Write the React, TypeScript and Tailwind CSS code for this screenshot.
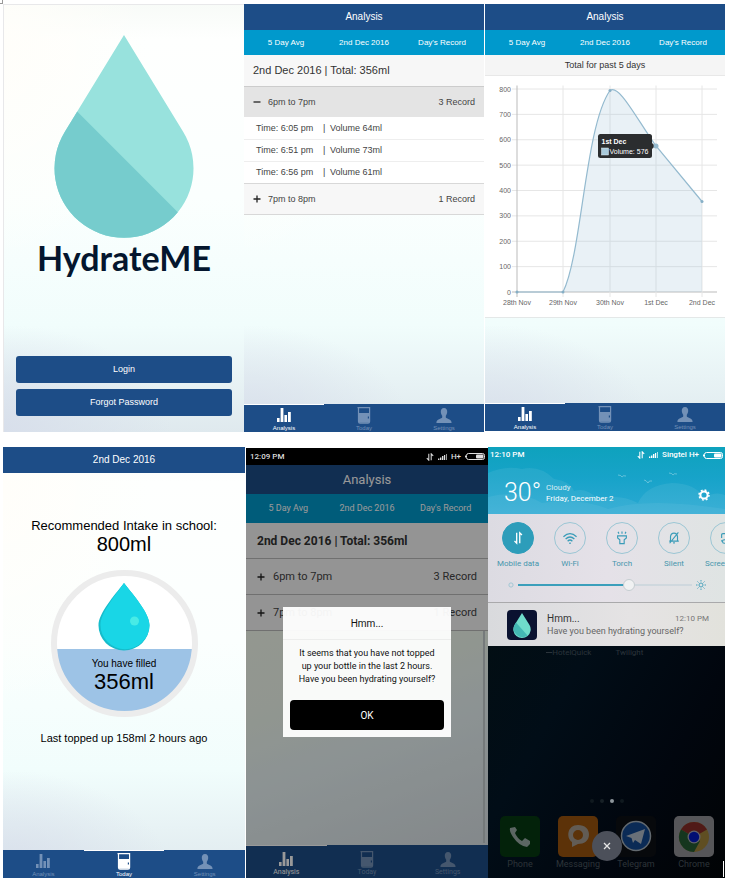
import { ReactNode } from "react";
import { clsx } from "clsx";

const HELV = "font-['Liberation_Sans',Arial,sans-serif]";
const ROBO = "font-[Roboto,'Noto_Sans',sans-serif]";
const PAPER =
  "bg-[radial-gradient(ellipse_70%_25%_at_0%_100%,#d8dfeb_0%,transparent_100%),radial-gradient(ellipse_60%_50%_at_0%_10%,#fffefa_0%,transparent_100%),linear-gradient(to_bottom,#f8fbf8_0%,#fefffe_8%,#fbfffe_45%,#f1fdfc_75%,#dfe9ee_100%)]";

function BarsIcon({ className }: { className: string }) {
  return (
    <svg viewBox="0 0 14 14" className={className} fill="currentColor" aria-hidden="true">
      <rect x="0" y="10" width="2.6" height="4" />
      <rect x="3.6" y="0" width="2.8" height="14" />
      <rect x="7.4" y="7" width="2.6" height="7" />
      <rect x="11" y="4" width="2.8" height="10" />
    </svg>
  );
}

function BeakerIcon({ className }: { className: string }) {
  return (
    <svg viewBox="0 0 14 17" className={className} fill="none" stroke="currentColor" aria-hidden="true">
      <path d="M0.5 0.6H13.2M1.5 1V14.6Q1.5 16.2 3 16.2H11Q12.6 16.2 12.6 14.6V1" strokeWidth="1.2" />
      <path d="M2 6H12V9.500H10.800V11.500H12V15.800H2Z" fill="currentColor" stroke="none" />
    </svg>
  );
}

function PersonIcon({ className }: { className: string }) {
  return (
    <svg viewBox="0 0 16 15" className={className} fill="currentColor" aria-hidden="true">
      <path d="M8 0C10.3 0 11.4 1.7 11.2 4C11.1 5.9 10.3 7 9.8 7.8V9.6C10.4 11 15.6 11 15.6 15H0.4C0.4 11 5.6 11 6.2 9.6V7.8C5.7 7 4.9 5.9 4.8 4C4.6 1.7 5.7 0 8 0Z" />
    </svg>
  );
}

function NavBar({ active, roboto = false }: { active: number; roboto?: boolean }) {
  const items = [
    { name: "Analysis", icon: <BarsIcon className="h-[14px] w-[14px]" /> },
    { name: "Today", icon: <BeakerIcon className="h-[17px] w-[14px]" /> },
    { name: "Settings", icon: <PersonIcon className="h-[15px] w-4" /> },
  ];
  return (
    <nav className={clsx("mt-auto grid grid-cols-3 bg-[#1d4d87]", roboto ? "h-[33px]" : "h-7")}>
      {items.map((item, i) => (
        <button
          key={item.name}
          type="button"
          className={clsx(
            "flex flex-col items-center justify-end border-t",
            i === active ? "border-white text-white" : "border-[#1d4d87] text-[#7391b7]",
            roboto && "pb-0.5",
          )}
        >
          <span className="flex h-[18px] items-center">{item.icon}</span>
          <span className={clsx("leading-[8px]", roboto ? "text-[7px]" : "text-[6px]")}>{item.name}</span>
        </button>
      ))}
    </nav>
  );
}

function TitleBar({ children, roboto = false }: { children: ReactNode; roboto?: boolean }) {
  return (
    <header
      className={clsx(
        "flex items-center justify-center bg-[#1d4d87] leading-none text-white",
        roboto ? "h-[29px] text-[13px]" : "h-[26px] text-[10px]",
      )}
    >
      {children}
    </header>
  );
}

function Tabs({ roboto = false }: { roboto?: boolean }) {
  return (
    <div
      className={clsx(
        "grid grid-cols-3 bg-[#0099cc] px-[3px] leading-none text-white",
        roboto ? "h-[29px] text-[9px]" : "h-[25px] text-[8px]",
      )}
    >
      <button type="button">5 Day Avg</button>
      <button type="button">2nd Dec 2016</button>
      <button type="button">Day's Record</button>
    </div>
  );
}

function GroupRow({ open, label, count, roboto = false }: { open?: boolean; label: string; count: string; roboto?: boolean }) {
  return (
    <button
      type="button"
      aria-expanded={!!open}
      className={clsx(
        "flex w-full items-center text-left leading-none text-[#444]",
        roboto ? "h-9 border-b border-[#bbb] bg-[#f7f7f7] px-[11px] text-[11px]" : "px-[9px] text-[9px]",
        !roboto && (open ? "h-[30px] bg-[#e4e4e4]" : "h-8 border-y border-[#d8d8d8] bg-[#f7f7f7]"),
      )}
    >
      <svg viewBox="0 0 8 8" className={clsx("h-2 w-2", roboto ? "mr-2" : "mr-[7px]")} stroke="#222" strokeWidth="1.3" aria-hidden="true">
        <path d={open ? "M0.5 4H7.5" : "M0.5 4H7.5M4 0.5V7.5"} />
      </svg>
      <span>{label}</span>
      <span className="ml-auto">{count}</span>
    </button>
  );
}

function LoginScreen() {
  return (
    <section className={clsx("flex flex-col items-center border-l border-t border-[#e8e8ea] px-3 pb-4 pt-[30px]", PAPER, HELV)}>
      <svg viewBox="0 0 140 203" className="h-[203px] w-[140px]" aria-hidden="true">
        <clipPath id="drop">
          <path d="M70 0L129.3 97A69.5 69.5 0 1 1 10.7 97Z" />
        </clipPath>
        <g clipPath="url(#drop)">
          <rect width="140" height="203" fill="#98e2dd" />
          <path d="M0 53.200L140 193.500V203H0Z" fill="#76cccd" />
        </g>
      </svg>
      <h1 className="font-[Lato,Carlito,sans-serif] text-[34px] font-bold leading-10 text-[#04162e]">HydrateME</h1>
      <div className="mt-auto flex w-full flex-col gap-1.5">
        <button type="button" className="h-[27px] rounded-[3px] bg-[#1d4d87] text-[9px] text-white">Login</button>
        <button type="button" className="h-[27px] rounded-[3px] bg-[#1d4d87] text-[9px] text-white">Forgot Password</button>
      </div>
    </section>
  );
}

const records = [
  ["Time: 6:05 pm", "Volume 64ml"],
  ["Time: 6:51 pm", "Volume 73ml"],
  ["Time: 6:56 pm", "Volume 61ml"],
];

function RecordScreen() {
  return (
    <section className={clsx("flex flex-col", PAPER, HELV)}>
      <TitleBar>Analysis</TitleBar>
      <Tabs />
      <h2 className="flex h-8 items-center border-b border-[#ccc] bg-[#f7f7f7] px-[9px] text-[11px] leading-none text-[#333]">
        2nd Dec 2016 | Total: 356ml
      </h2>
      <GroupRow open label="6pm to 7pm" count="3 Record" />
      <ul className="bg-white text-[9px] leading-none text-[#444]">
        {records.map(([time, volume], i) => (
          <li key={time} className={clsx("flex h-[22px] items-center pl-3", i > 0 && "border-t border-[#eee]")}>
            <span className="w-[67px]">{time}</span>
            <span className="w-[7px]">|</span>
            <span>{volume}</span>
          </li>
        ))}
      </ul>
      <GroupRow label="7pm to 8pm" count="1 Record" />
      <NavBar active={0} />
    </section>
  );
}

const dayX = [32, 78, 125, 171, 217];
const days = ["28th Nov", "29th Nov", "30th Nov", "1st Dec", "2nd Dec"];
const dots = [[32, 216], [78, 216], [125, 14.5], [217, 125.5]];
const ticks = [0, 100, 200, 300, 400, 500, 600, 700, 800];
const curve = "M32 216H78C97 178 100 50 125 14.5C134 8 150 40 171 70L217 125.5";

function Chart() {
  return (
    <svg viewBox="0 0 240 241" className="w-full bg-white" role="img" aria-label="Total for past 5 days">
      {ticks.map((t) => {
        const y = 216 - t * 0.25375;
        return (
          <g key={t}>
            <path d={`M27 ${y}H232`} stroke={t === 0 ? "#bbb" : "#e6e6e6"} />
            <text x="26" y={y + 2.5} textAnchor="end" fontSize="7" fill="#666">{t}</text>
          </g>
        );
      })}
      {dayX.map((x, i) => (
        <g key={x}>
          <path d={`M${x} 9.500V221`} stroke={i === 0 ? "#bbb" : "#e6e6e6"} />
          <text x={x} y="228.500" textAnchor="middle" fontSize="7" fill="#666">{days[i]}</text>
        </g>
      ))}
      <path d={`${curve}V216Z`} fill="#a0c4d6" fillOpacity="0.23" />
      <path d={curve} fill="none" stroke="#94bacf" strokeWidth="1.2" />
      {dots.map(([x, y]) => (
        <circle key={x} cx={x} cy={y} r="1.500" fill="#86afc6" />
      ))}
      <path d="M167 67L170 70L167 73Z" fill="#2b2d2f" />
      <rect x="113" y="58" width="54" height="24" rx="2.500" fill="#2b2d2f" />
      <circle cx="171" cy="70" r="2.500" fill="#94bacf" />
      <text x="116.500" y="68" fontSize="7" fontWeight="bold" fill="#fff">1st Dec</text>
      <rect x="116.500" y="72" width="7" height="7" fill="#a9cadb" stroke="#dfeef6" strokeWidth="0.500" />
      <text x="124.500" y="78" fontSize="7" fill="#fff">Volume: 576</text>
    </svg>
  );
}

function ChartScreen() {
  return (
    <section className={clsx("mb-px flex flex-col", PAPER, HELV)}>
      <TitleBar>Analysis</TitleBar>
      <Tabs />
      <h2 className="flex h-[21px] items-center justify-center border-b border-[#e8e8e8] bg-[#f5f5f5] text-[9px] leading-none text-[#333]">
        Total for past 5 days
      </h2>
      <div className="border-b border-[#e4e8e8]"><Chart /></div>
      <NavBar active={0} />
    </section>
  );
}

function TodayScreen() {
  return (
    <section className={clsx("flex flex-col text-black", PAPER, HELV)}>
      <TitleBar>2nd Dec 2016</TitleBar>
      <div className="flex flex-col items-center pt-[45px]">
        <p className="text-[13px] leading-[15px]">Recommended Intake in school:</p>
        <p className="text-[20px] leading-[22px]">800ml</p>
        <div className="mt-[15px] flex h-[147px] w-[147px] flex-col items-center overflow-hidden rounded-full border-[6px] border-[#ececec] bg-[linear-gradient(to_bottom,white_73px,#9dc3e6_73px)] pt-[7px]">
          <svg viewBox="0 0 52 68" className="h-[68px] w-[52px]" aria-hidden="true">
            <path d="M26 0C36 13 51.500 30 51.500 42.500A25.500 25 0 0 1 0.500 42.500C0.500 30 16 13 26 0Z" fill="#16bccb" />
            <path d="M26 0C36 13 51.500 30 51.500 42A24.500 24.200 0 0 1 2.500 42C2.500 30 17 13 26 0Z" fill="#19d6e6" />
            <circle cx="36.500" cy="38" r="4.500" fill="#48ebe6" />
          </svg>
          <p className="mt-[7px] text-[10px] leading-3">You have filled</p>
          <p className="text-[22px] leading-6">356ml</p>
        </div>
        <p className="mt-[14px] text-[11px] leading-[14px]">Last topped up 158ml 2 hours ago</p>
      </div>
      <NavBar active={1} />
    </section>
  );
}

function DataArrows({ className }: { className: string }) {
  return (
    <svg viewBox="0 0 10 10" className={className} fill="none" stroke="currentColor" strokeWidth="1.3" aria-hidden="true">
      <path d="M3.500 1V9L1 6.500M6.500 9V1L9 3.500" />
    </svg>
  );
}

function StatusIcons({ carrier }: { carrier: string }) {
  return (
    <span className="ml-auto flex items-center gap-1">
      <DataArrows className="h-2 w-2" />
      <svg viewBox="0 0 9 6" className="h-1.5 w-[9px]" fill="currentColor" aria-hidden="true">
        <path d="M0 4.500H1.400V6H0ZM2 3.500H3.400V6H2ZM4 2H5.400V6H4ZM6 1H7.200V6H6ZM8 0H8.700V6H8Z" />
      </svg>
      <span>{carrier}</span>
      <svg viewBox="0 0 20 7" className="h-[7px] w-5" aria-hidden="true">
        <rect x="1.500" y="0.500" width="18" height="6" rx="2" fill="none" stroke="currentColor" />
        <rect x="11" y="1.500" width="7.500" height="4" rx="1" fill="currentColor" />
        <rect x="0" y="2.500" width="1" height="2" fill="currentColor" />
      </svg>
    </span>
  );
}

function DialogScreen() {
  return (
    <section className={clsx("mt-px flex flex-col bg-black", ROBO)}>
      <div className="flex h-[17px] items-center pl-1 pr-[3px] text-[8px] font-medium leading-none text-[#ddd]">
        <span>12:09 PM</span>
        <StatusIcons carrier="H+" />
      </div>
      <div className="relative flex grow flex-col bg-[linear-gradient(160deg,#fdfff2_0%,#f2fbf0_50%,#eaf5f6_65%,#d8dfe4_100%)]">
        <TitleBar roboto>Analysis</TitleBar>
        <Tabs roboto />
        <h2 className="flex h-9 items-center border-b border-[#bbb] bg-[#f7f7f7] px-[11px] text-[12px] font-bold leading-none text-[#333]">
          2nd Dec 2016 | Total: 356ml
        </h2>
        <GroupRow roboto label="6pm to 7pm" count="3 Record" />
        <GroupRow roboto label="7pm to 8pm" count="1 Record" />
        <div className="mb-0.5 mr-[3px] grow border-r-2 border-[#c4cccd]" />
        <NavBar active={0} roboto />
        <div className="absolute inset-0 flex justify-center bg-black/40 pt-[142px]">
          <div role="dialog" aria-label="Hmm..." className="flex h-[130px] w-[168px] flex-col bg-white/95 text-center text-[#111]">
            <h3 className="h-[33px] border-b border-black/5 text-[10px] leading-[33px]">Hmm...</h3>
            <p className="pt-[7px] text-[9px] leading-[13px]">
              It seems that you have not topped<br />
              up your bottle in the last 2 hours.<br />
              Have you been hydrating yourself?
            </p>
            <button type="button" className="mx-[7px] mb-[7px] mt-auto h-[30px] rounded-sm bg-black text-[10px] text-white">OK</button>
          </div>
        </div>
      </div>
    </section>
  );
}

const toggles = [
  { name: "Mobile data", on: true, icon: <path d="M6.500 2V14L4 11.500M10 14V2L12.500 4.500" strokeWidth="1.500" /> },
  {
    name: "Wi-Fi",
    icon: <path d="M0.500 6.500Q8 -0.500 15.500 6.500M3 9.200Q8 4.500 13 9.200M5.300 11.700Q8 9 10.700 11.700M7.200 14H8.800" strokeWidth="1.500" />,
  },
  { name: "Torch", icon: <path d="M3 5.500H13V8L10.500 10V14.500H5.500V10L3 8ZM8 0.500V3M3.500 1L4.500 3M12.500 1L11.500 3" strokeWidth="1.300" /> },
  { name: "Silent", icon: <path d="M4 11.500V6.500Q4.500 2.500 8 2.500Q11.500 2.500 12 6.500V11.500ZM2.500 11.500H13.500M7 13.500H9M13 1.500L3 14" strokeWidth="1.300" /> },
  { name: "Scree", edge: true, icon: <path d="M8 3H4.500Q3 3 3 4.500V8M3 10.500V12M13 8V4.500Q13 3 11.500 3M6 14A2 2 0 1 1 6 10A2 2 0 1 1 6 14M8 10.500L13 8" strokeWidth="1.300" /> },
];

function Sun({ big = false }: { big?: boolean }) {
  return (
    <svg viewBox="0 0 10 10" className={big ? "h-2.5 w-2.5" : "h-1.5 w-1.5"} fill="none" stroke={big ? "#4ba3bd" : "#9cc4d2"} strokeWidth={big ? 1 : 1.500} aria-hidden="true">
      <circle cx="5" cy="5" r={big ? 2 : 3.500} />
      {big && <path d="M5 0V1.500M5 8.500V10M0 5H1.500M8.500 5H10M1.500 1.500L2.500 2.500M7.500 7.500L8.500 8.500M1.500 8.500L2.500 7.500M7.500 2.500L8.500 1.500" />}
    </svg>
  );
}

const apps = [
  {
    name: "Phone",
    tile: "bg-[#03220a]",
    icon: <path d="M10 12Q9 15 13 21Q19 30 27 31L30 28V25L25 22L22 25Q17 22 15 17L17 14L15 11Z" fill="#5c6663" />,
  },
  {
    name: "Messaging",
    tile: "bg-[#5c3208]",
    icon: <path d="M20 9C27 9 31 13 31 18.500C31 25 26 28 20 28L14 31L14 26C8 22 9 9 20 9ZM20 14A5 5 0 1 0 20 24A5 5 0 1 0 20 14Z" fill="#625c55" fillRule="evenodd" />,
  },
  {
    name: "Telegram",
    tile: "bg-[#07090c]",
    icon: (
      <>
        <circle cx="20" cy="20" r="14.500" fill="#0b2b56" stroke="#62696f" strokeWidth="1.500" />
        <path d="M10 20L29 13L25 28L19 24L17 27L15.500 22Z" fill="#697078" />
      </>
    ),
  },
  {
    name: "Chrome",
    tile: "bg-[#565659]",
    icon: (
      <>
        <circle cx="20" cy="21" r="15" fill="#5f4e22" />
        <path d="M20 21L7 13.500A15 15 0 0 1 33 13.500Z" fill="#501a17" />
        <path d="M20 21L7 13.500A15 15 0 0 0 20 36L26 25Z" fill="#15361e" />
        <circle cx="20" cy="21" r="6.500" fill="#62626a" />
        <circle cx="20" cy="21" r="5.200" fill="#020f73" />
      </>
    ),
  },
];

function PhoneScreen() {
  return (
    <section className={clsx("relative flex flex-col overflow-hidden bg-[linear-gradient(120deg,#040f10_0%,#010d17_45%,#01060e_75%,#010305_100%)]", ROBO)}>
      <div className="relative h-[67px] shrink-0 bg-[linear-gradient(to_bottom,#0ea2bd_0%,#17a3c9_45%,#2ba9d3_100%)] text-white">
        <svg viewBox="0 0 237 67" className="absolute inset-0 h-full w-full" preserveAspectRatio="none" aria-hidden="true">
          <path d="M0 26Q18 18 34 22Q52 18 66 32Q82 34 86 44Q98 40 110 52Q130 46 150 56Q158 38 184 36Q206 36 216 50Q228 44 237 48V67H0Z" fill="#fff" fillOpacity="0.07" />
          <path d="M0 50Q30 42 54 56Q90 50 120 62Q160 50 237 62V67H0Z" fill="#fff" fillOpacity="0.06" />
          <path d="M130 28Q133 28 134 30Q135 28 138 29M156 33Q158 33 160 36Q161 33 164 34M181 26Q184 26 185 28Q186 26 189 27" fill="none" stroke="#fff" strokeOpacity="0.400" strokeWidth="0.800" />
        </svg>
        <div className="relative flex h-4 items-center pl-0.5 pr-0.5 text-[8px] font-medium leading-none">
          <span>12:10 PM</span>
          <StatusIcons carrier="Singtel H+" />
        </div>
        <div className="relative flex items-center pl-4 pr-[15px] pt-3.5">
          <span className="w-[42px] text-[25px] font-light leading-8">30°</span>
          <span className="flex flex-col text-[8px] leading-[11px]">
            <span className="opacity-80">Cloudy</span>
            <span>Friday, December 2</span>
          </span>
          <button type="button" aria-label="Settings" className="ml-auto mt-1">
            <svg viewBox="0 0 12 12" className="h-3 w-3" fill="none" stroke="white" aria-hidden="true">
              <circle cx="6" cy="6" r="3.600" strokeWidth="2" />
              <circle cx="6" cy="6" r="5" strokeWidth="1.500" strokeDasharray="1.900 2.027" />
            </svg>
          </button>
        </div>
      </div>
      <div className="h-[89px] shrink-0 border-b border-[#a9a9ab] bg-[linear-gradient(to_right,#dcdbe2,#e5e1e8_50%,#dfe4e3)] pt-2 text-[#4796ad]">
        <div className="flex overflow-hidden pl-1">
          {toggles.map((t) => (
            <button key={t.name} type="button" className={clsx("flex w-[52px] shrink-0 flex-col", t.edge ? "items-start pl-[5px]" : "items-center")}>
              <span
                className={clsx(
                  "flex h-8 w-8 items-center justify-center rounded-full border",
                  t.edge && "ml-[5px]",
                  t.on ? "border-[#2d9dba] bg-[#2d9dba] text-white" : "border-[#9bc6d4] text-[#3a9cb8]",
                )}
              >
                <svg viewBox="0 0 16 16" className="h-3.5 w-3.5" fill="none" stroke="currentColor" aria-hidden="true">{t.icon}</svg>
              </span>
              <span className="mt-1 whitespace-nowrap text-[8px] leading-3">{t.name}</span>
            </button>
          ))}
        </div>
        <div className="flex items-center gap-1 pl-5 pr-[19px] pt-[9px]">
          <Sun />
          <input
            type="range"
            aria-label="Brightness"
            defaultValue={65}
            className="h-3 min-w-0 grow appearance-none bg-[linear-gradient(to_right,#3b9fbb_64%,#cfd8de_64%)] bg-[length:100%_2px] bg-center bg-no-repeat [&::-webkit-slider-thumb]:h-3 [&::-webkit-slider-thumb]:w-3 [&::-webkit-slider-thumb]:appearance-none [&::-webkit-slider-thumb]:rounded-full [&::-webkit-slider-thumb]:border [&::-webkit-slider-thumb]:border-[#c5cdd1] [&::-webkit-slider-thumb]:bg-[#f0f1f2]"
          />
          <Sun big />
        </div>
      </div>
      <div className="flex h-[43px] shrink-0 items-center bg-[linear-gradient(to_right,#d9dadd,#e5e3e4_60%,#e2e2dc)] pl-[19px] pr-4">
        <svg viewBox="0 0 30 30" className="h-[30px] w-[30px]" aria-hidden="true">
          <rect width="30" height="30" rx="4" fill="#0a1230" />
          <path d="M15 3L22.500 15A8.700 8.700 0 1 1 7.500 15Z" fill="#6fdccb" />
          <path d="M9 12.500L20.500 25.500A8.700 8.700 0 0 1 7.500 15Z" fill="#43b8b4" />
        </svg>
        <div className="ml-2.5 grow">
          <div className="flex items-center justify-between leading-3">
            <span className="text-[10px] text-[#333]">Hmm...</span>
            <span className="text-[8px] text-[#777]">12:10 PM</span>
          </div>
          <p className="text-[9px] leading-3 text-[#666]">Have you been hydrating yourself?</p>
        </div>
      </div>
      <div className="flex gap-5 pl-[58px] pt-px text-[8px] leading-3 text-[#2b343b]">
        <span><span className="line-through">—</span>HotelQuick</span>
        <span className="pl-1">Twilight</span>
      </div>
      <div className="mt-auto flex justify-center gap-1.5 pb-[13px]">
        <span className="h-1 w-1 rounded-full bg-[#10191f]" />
        <span className="h-1 w-1 rounded-full bg-[#172026]" />
        <span className="h-1 w-1 rounded-full bg-[#8e969c]" />
        <span className="h-1 w-1 rounded-full bg-[#10191f]" />
      </div>
      <div className="flex justify-between pb-2 pl-3 pr-[11px]">
        {apps.map((app) => (
          <button key={app.name} type="button" className="flex w-10 flex-col items-center">
            <span className={clsx("h-[41px] w-10 rounded-[5px]", app.tile)}>
              <svg viewBox="0 0 40 41" className="h-full w-full" aria-hidden="true">{app.icon}</svg>
            </span>
            <span className="mt-0.5 text-[9px] leading-[11px] text-[#2d3439]">{app.name}</span>
          </button>
        ))}
      </div>
      <button
        type="button"
        aria-label="Clear notifications"
        className="absolute bottom-[17px] left-1/2 flex h-[30px] w-[30px] -translate-x-1/2 items-center justify-center rounded-full bg-[#4c505a]"
      >
        <svg viewBox="0 0 8 8" className="h-2 w-2" stroke="#e6e6e6" strokeWidth="1.300" aria-hidden="true">
          <path d="M1 1L7 7M7 1L1 7" />
        </svg>
      </button>
      <span className="absolute bottom-px right-px h-4 w-px bg-white" />
    </section>
  );
}

export default function App() {
  return (
    <main className="relative bg-white pb-1 pl-[3px] pr-1 pt-1">
      <span className="absolute left-0 top-0 h-1 w-[3px] border-b border-r border-[#999]" />
      <div className="grid min-h-[428px] grid-cols-[241fr_240fr_241fr]">
        <LoginScreen />
        <RecordScreen />
        <div className="grid pl-px"><ChartScreen /></div>
      </div>
      <div className="mt-[15px] grid min-h-[431px] grid-cols-[242fr_243fr_237fr]">
        <TodayScreen />
        <div className="grid pl-px"><DialogScreen /></div>
        <PhoneScreen />
      </div>
    </main>
  );
}
